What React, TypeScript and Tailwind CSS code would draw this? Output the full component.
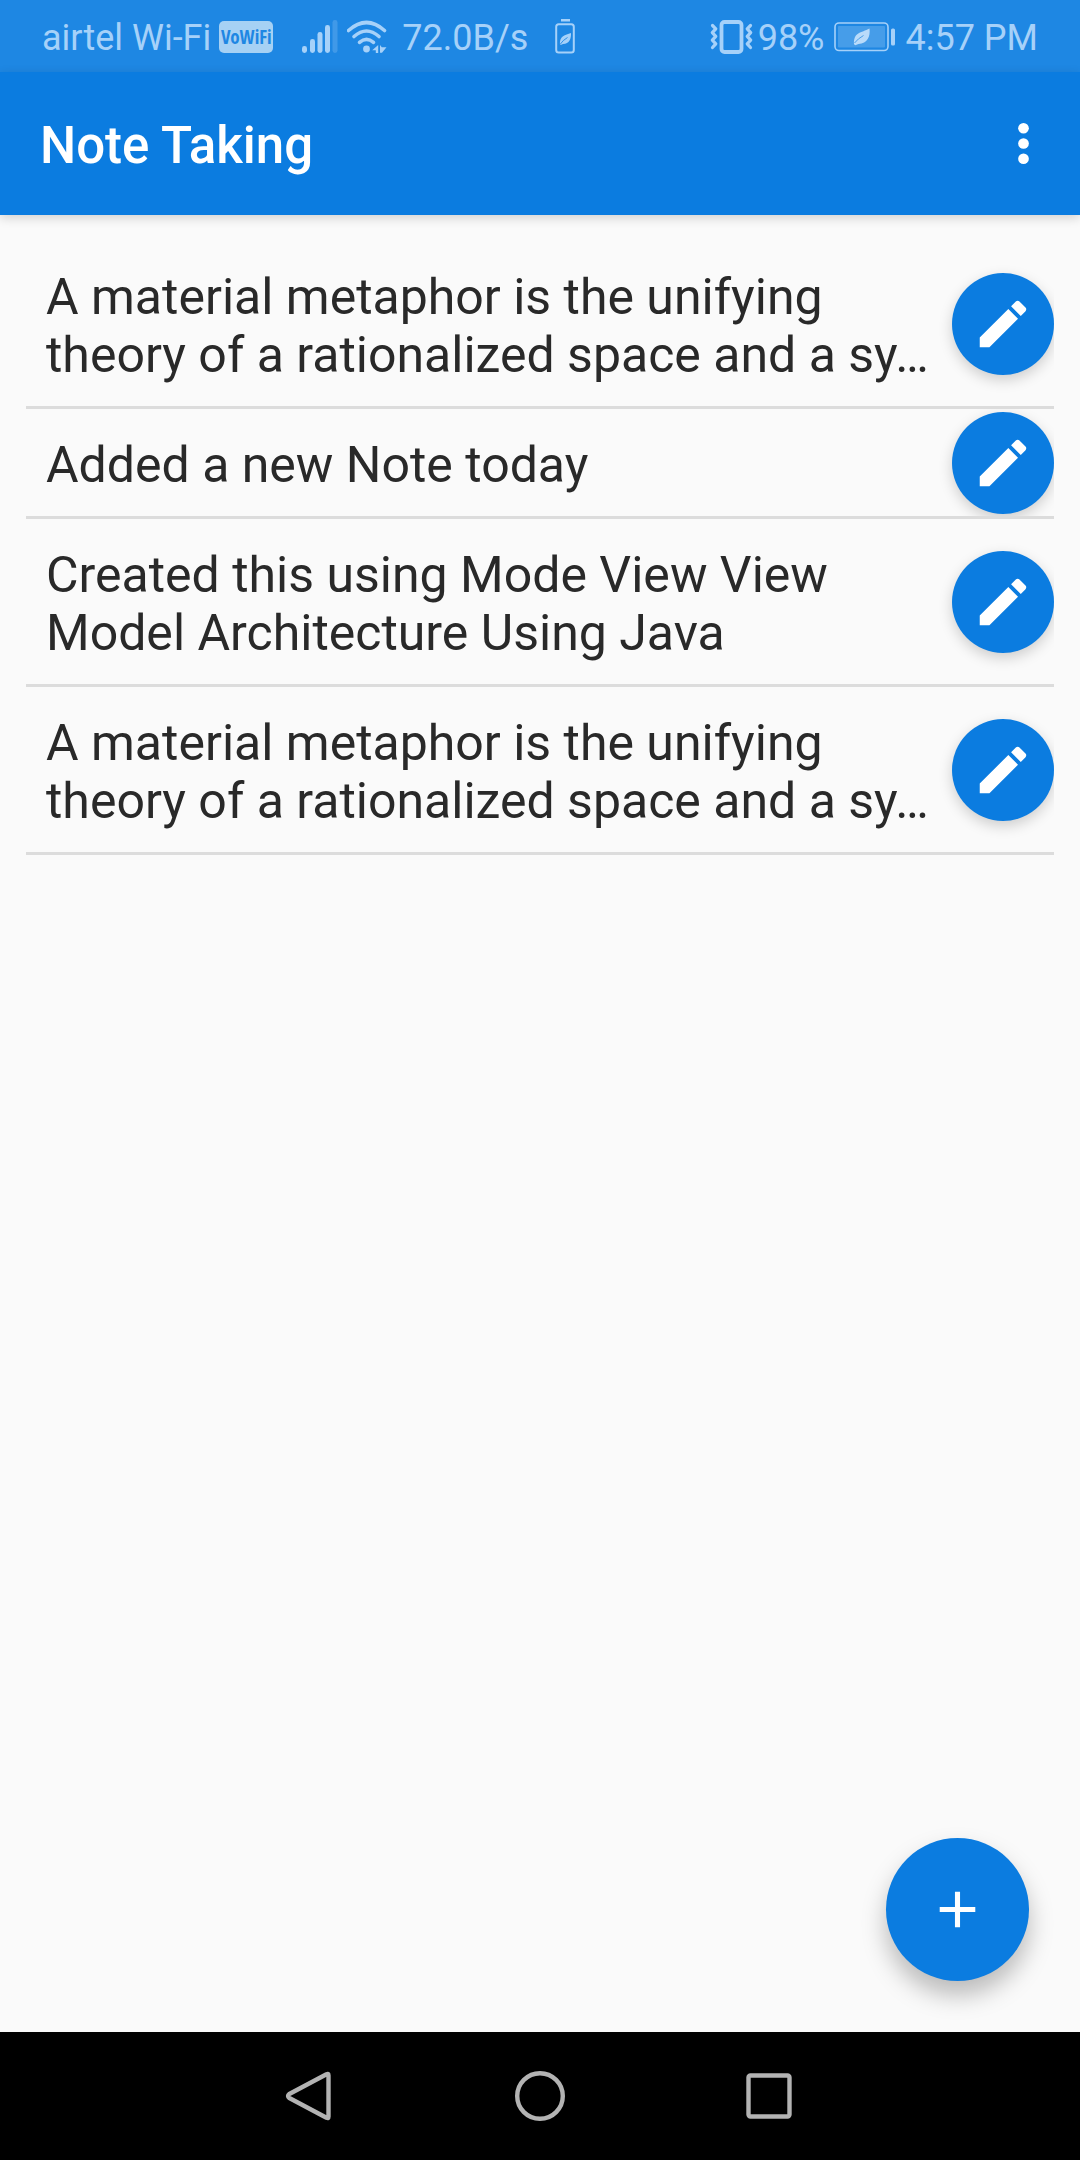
import React from "react";

const notes = [
  "A material metaphor is the unifying theory of a rationalized space and a sy…",
  "Added a new Note today",
  "Created this using Mode View View Model Architecture Using Java",
  "A material metaphor is the unifying theory of a rationalized space and a sy…",
];

function SignalIcon() {
  return (
    <svg className="h-[34px] w-9" viewBox="0 0 36 34" fill="currentColor" aria-hidden="true">
      <rect x="0" y="26" width="5" height="7" rx="2.4" />
      <rect x="8" y="19" width="5" height="14" rx="2.4" />
      <rect x="15.5" y="12" width="5" height="21" rx="2.4" />
      <rect x="23" y="5" width="5" height="28" rx="2.4" />
      <rect x="30.5" y="0" width="5" height="33" rx="2.4" opacity="0.25" />
    </svg>
  );
}

function WifiIcon() {
  return (
    <svg className="h-[34px] w-10" viewBox="0 0 40 34" fill="none" stroke="currentColor" strokeWidth="3.6" aria-hidden="true">
      <path d="M1.5 10.5Q19.5 -5.5 37.5 10.5" strokeLinecap="round" />
      <path d="M7 16.5Q19.5 5.5 32 16.5" strokeLinecap="round" />
      <path d="M12.5 22.3Q19.5 16.3 26.5 22.3" strokeLinecap="round" />
      <circle cx="19.5" cy="29" r="3.4" fill="currentColor" stroke="none" />
      <path d="M31.2 25v8h-2.4v-2.7H25.2z" fill="currentColor" stroke="none" />
      <path d="M33 25l1.8 2.2h4.7L35 32.8h-2z" fill="currentColor" stroke="none" />
    </svg>
  );
}

function SaverIcon() {
  return (
    <svg className="h-[35px] w-5" viewBox="0 0 20 35" fill="none" stroke="currentColor" aria-hidden="true">
      <rect x="6" y="0" width="9" height="2.5" fill="currentColor" stroke="none" />
      <rect x="1.2" y="5.2" width="17.6" height="28.3" rx="2.5" strokeWidth="2" />
      <path d="M16 14c.3 5.5-1.5 11-8 11l-2.3 1-.8-.8C4.5 17 10 16 16 14z" fill="currentColor" stroke="none" />
      <path d="M5 25.5Q8 21 12.5 18.5" stroke="#1e87e3" strokeWidth="0.9" />
    </svg>
  );
}

function VibrateIcon() {
  return (
    <svg className="h-[34px] w-[43px]" viewBox="0 0 43 34" fill="none" stroke="currentColor" aria-hidden="true">
      <rect x="11.5" y="2" width="20" height="30" rx="3" strokeWidth="3.8" />
      <path d="M2.5 5.5l3.3 3.3-3.5 3.8 3.5 3.8-3.5 3.8 3.5 3.7-3.3 3.6" strokeWidth="3.2" strokeLinecap="round" strokeLinejoin="round" />
      <path d="M40.5 5.5l-3.3 3.3 3.5 3.8-3.5 3.8 3.5 3.8-3.5 3.7 3.3 3.6" strokeWidth="3.2" strokeLinecap="round" strokeLinejoin="round" />
    </svg>
  );
}

function BatteryIcon() {
  return (
    <svg className="h-[30px] w-[62px]" viewBox="0 0 62 30" fill="none" stroke="currentColor" aria-hidden="true">
      <rect x="1" y="1" width="53" height="27.5" rx="4" strokeWidth="1.6" />
      <rect x="4" y="4" width="47" height="21.5" rx="1" fill="currentColor" stroke="none" opacity="0.3" />
      <path d="M35.5 6.5c1 8-2 15-11 15.5l-3.2 1.3-1.3-1C19.5 10 27 11 35.5 6.5z" fill="#b9dbfa" stroke="none" />
      <path d="M20.5 21Q24 16.5 29.5 13.5" stroke="#4a9fe9" strokeWidth="1" />
      <rect x="57" y="6.5" width="4" height="17" rx="1.5" fill="currentColor" stroke="none" />
    </svg>
  );
}

function StatusBar() {
  return (
    <header className="flex h-[72px] shrink-0 items-center bg-[#1e87e3] pt-px pl-[42px] pr-[42px] text-4xl whitespace-nowrap text-[#a6d1f9]">
      <span className="pt-0.5">airtel Wi-Fi</span>
      <span className="ml-2 flex h-8 w-[54px] items-center justify-center rounded-[5px] bg-[#a6d1f4] font-['Open_Sans_Condensed','Roboto_Condensed','Roboto',sans-serif] text-[19px] leading-8 font-black text-[#1e87e3]">
        VoWiFi
      </span>
      <span className="ml-[29px]"><SignalIcon /></span>
      <span className="ml-[9px]"><WifiIcon /></span>
      <span className="ml-[15px] pt-0.5">72.0B/s</span>
      <span className="ml-[27px]"><SaverIcon /></span>
      <span className="ml-auto"><VibrateIcon /></span>
      <span className="ml-[5px] pt-0.5">98%</span>
      <span className="ml-[9px]"><BatteryIcon /></span>
      <time className="ml-[10px] pt-0.5">4:57 PM</time>
    </header>
  );
}

function NoteRow({ text }: { text: string }) {
  return (
    <li className="flex items-center justify-between overflow-hidden border-b-[3px] border-[#dcdcdc] pl-5">
      <p className="min-w-0 flex-1 pt-[27px] pr-5 pb-[22px] text-[50px] leading-[58px] text-[#292929]">{text}</p>
      <button
        type="button"
        aria-label="Edit note"
        className="flex size-[102px] shrink-0 items-center justify-center rounded-full bg-[#0b7ce0] text-white shadow-[0_5px_14px_rgba(0,0,0,0.18)]"
      >
        <svg className="size-[62px]" viewBox="0 0 24 24" fill="currentColor" aria-hidden="true">
          <path d="M3 17.25V21h3.75L17.81 9.94l-3.75-3.75L3 17.25zM20.71 7.04c.39-.39.39-1.02 0-1.41l-2.34-2.34c-.39-.39-1.02-.39-1.41 0l-1.83 1.83 3.75 3.75 1.83-1.83z" />
        </svg>
      </button>
    </li>
  );
}

export default function App() {
  return (
    <div className="flex min-h-screen flex-col bg-[#fafafa] font-['Roboto',sans-serif]">
      <StatusBar />
      <div className="z-10 flex h-[143px] shrink-0 items-center justify-between bg-[#0b7ce0] pl-10 pr-[26px] text-white shadow-[0_3px_10px_rgba(0,0,0,0.16)]">
        <h1 className="pt-1 text-[51px] leading-[60px] font-medium">Note Taking</h1>
        <button type="button" aria-label="More options">
          <svg className="size-[61px]" viewBox="0 0 24 24" fill="currentColor" aria-hidden="true">
            <circle cx="12" cy="6" r="2.1" />
            <circle cx="12" cy="12" r="2.1" />
            <circle cx="12" cy="18" r="2.1" />
          </svg>
        </button>
      </div>
      <main className="relative flex-1 p-[26px]">
        <ul>
          {notes.map((text, i) => (
            <NoteRow key={i} text={text} />
          ))}
        </ul>
        <button
          type="button"
          aria-label="Add note"
          className="absolute right-[51px] bottom-[51px] flex size-[143px] items-center justify-center rounded-full bg-[#0b7ce0] text-white shadow-[0_14px_24px_rgba(0,0,0,0.26)]"
        >
          <svg className="size-[61px]" viewBox="0 0 24 24" fill="currentColor" aria-hidden="true">
            <path d="M19 13h-6v6h-2v-6H5v-2h6V5h2v6h6v2z" />
          </svg>
        </button>
      </main>
      <nav className="flex h-32 shrink-0 items-center justify-center gap-[178px] bg-black text-[#b3b3b3]">
        <button type="button" aria-label="Back">
          <svg className="size-[52px]" viewBox="0 0 52 52" fill="none" stroke="currentColor" strokeWidth="4.4" strokeLinejoin="round" aria-hidden="true">
            <path d="M42.5 4.3Q44.5 3 44.5 5.5V46.5Q44.5 49 42.5 47.7L5.3 28Q2.8 26 5.3 24z" />
          </svg>
        </button>
        <button type="button" aria-label="Home">
          <svg className="size-[52px]" viewBox="0 0 52 52" fill="none" stroke="currentColor" strokeWidth="4.4" aria-hidden="true">
            <circle cx="26" cy="26" r="22.8" />
          </svg>
        </button>
        <button type="button" aria-label="Recent apps">
          <svg className="size-[52px]" viewBox="0 0 52 52" fill="none" stroke="currentColor" strokeWidth="4.4" aria-hidden="true">
            <rect x="4.5" y="5.5" width="41" height="41" rx="2" />
          </svg>
        </button>
      </nav>
    </div>
  );
}
